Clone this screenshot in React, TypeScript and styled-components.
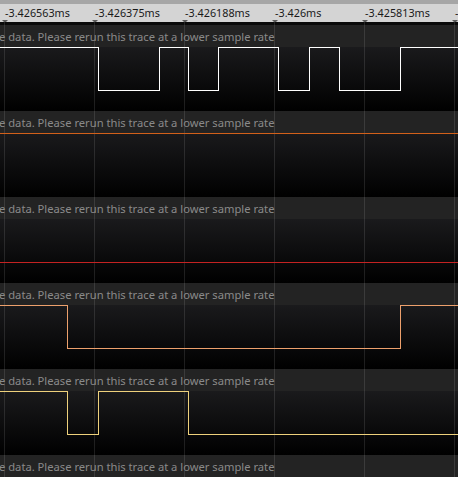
import styled, { createGlobalStyle, css } from 'styled-components';

const GlobalStyle = createGlobalStyle`
  html, body {
    margin: 0;
    padding: 0;
    background: #000;
    overflow: hidden;
  }
  body {
    font-family: 'Noto Sans', 'DejaVu Sans', sans-serif;
  }
`;

const VIEW_WIDTH = 458;
const HIGH_Y = 0.5;
const LOW_Y = 43.5;

const tickLabels = ['-3.426563ms', '-3.426375ms', '-3.426188ms', '-3.426ms', '-3.425813ms', '-3.425625ms'];

const NOTICE = 'e data. Please rerun this trace at a lower sample rate';

interface Channel {
  color?: string;
  startHigh: boolean;
  edges: number[];
}

const channels: Channel[] = [
  { color: '#ffffff', startHigh: true, edges: [98, 159, 188, 218, 278, 309, 339, 400] },
  { color: '#d2601a', startHigh: true, edges: [] },
  { color: '#c42222', startHigh: false, edges: [] },
  { color: '#eda06c', startHigh: true, edges: [67, 400] },
  { color: '#eed17c', startHigh: true, edges: [67, 98, 188] },
  { startHigh: true, edges: [] },
];

// turns a list of edge positions into a square wave polyline
const wavePoints = ({ startHigh, edges }: Channel) => {
  let high = startHigh;
  let y = high ? HIGH_Y : LOW_Y;
  const pts: string[] = [`0,${y}`];
  edges.forEach((e) => {
    const x = e + 0.5;
    pts.push(`${x},${y}`);
    high = !high;
    y = high ? HIGH_Y : LOW_Y;
    pts.push(`${x},${y}`);
  });
  pts.push(`${VIEW_WIDTH},${y}`);
  return pts.join(' ');
};

// vertical time grid, one line every 90px starting at x=4
const gridLines = css`
  background-image: linear-gradient(90deg, rgba(255, 255, 255, 0.11) 1px, transparent 1px);
  background-size: 90px 100%;
  background-position: 4px 0;
  background-repeat: repeat-x;
`;

export default function App() {
  return (
    <>
      <GlobalStyle />
      <Viewer>
        <Ruler>
          <RulerTop />
          <RulerTrack>
            {tickLabels.map((label) => (
              <Tick key={label}>
                <TickLabel>{label}</TickLabel>
                <TickMark />
              </Tick>
            ))}
          </RulerTrack>
        </Ruler>
        <Gap />
        {channels.map((ch, i) => (
          <Band key={i}>
            <BandHeader>
              <Notice>{NOTICE}</Notice>
            </BandHeader>
            <SignalArea>
              {ch.color && (
                <svg width={VIEW_WIDTH} height={64} shapeRendering="crispEdges">
                  <polyline points={wavePoints(ch)} fill="none" stroke={ch.color} strokeWidth={1} />
                </svg>
              )}
            </SignalArea>
          </Band>
        ))}
      </Viewer>
    </>
  );
}

const Viewer = styled.div`
  width: ${VIEW_WIDTH}px;
  height: 477px;
  overflow: hidden;
  display: flex;
  flex-direction: column;
  background: #000;
`;

const Ruler = styled.div`
  flex: 0 0 auto;
  display: flex;
  flex-direction: column;
  background: #d4d4d4;
`;

const RulerTop = styled.div`
  height: 4px;
  background: #a6a6a6;
`;

const RulerTrack = styled.div`
  height: 18px;
  display: flex;
  padding-left: 4px;
`;

const Tick = styled.div`
  flex: 0 0 90px;
  display: flex;
  flex-direction: column;
  justify-content: space-between;
`;

const TickLabel = styled.span`
  font-size: 10.8px;
  line-height: 14px;
  padding-top: 2px;
  color: #1a1a1a;
  padding-left: 1px;
  white-space: nowrap;
`;

const TickMark = styled.span`
  width: 0;
  height: 0;
  margin-left: -2px;
  border-left: 3px solid transparent;
  border-right: 3px solid transparent;
  border-top: 3px solid #5a5a5a;
`;

const Gap = styled.div`
  height: 3px;
  flex: 0 0 auto;
  background: #0a0a0a;
  ${gridLines}
`;

const Band = styled.div`
  flex: 0 0 auto;
  display: flex;
  flex-direction: column;
`;

const BandHeader = styled.div`
  height: 22px;
  display: flex;
  align-items: center;
  background-color: #232323;
  ${gridLines}
`;

const Notice = styled.span`
  margin-left: -1px;
  font-size: 11.2px;
  color: #8a8a8a;
  white-space: nowrap;
`;

const SignalArea = styled.div`
  height: 64px;
  background-color: #000;
  background-image: linear-gradient(90deg, rgba(255, 255, 255, 0.11) 1px, transparent 1px),
    linear-gradient(#1a1a1c, #000);
  background-size: 90px 100%, 100% 100%;
  background-position: 4px 0, 0 0;
  background-repeat: repeat-x, no-repeat;

  svg {
    display: block;
  }
`;
